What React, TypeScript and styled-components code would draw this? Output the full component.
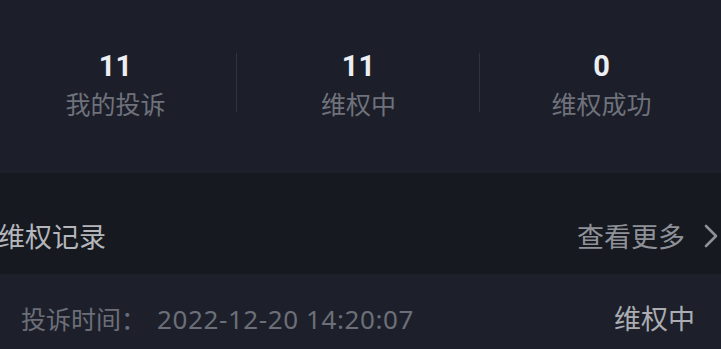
import styled, { createGlobalStyle } from "styled-components";

const GlobalStyle = createGlobalStyle`
  html, body {
    margin: 0;
    padding: 0;
    background: #1d202b;
    overflow: hidden;
  }
  body {
    font-family: Roboto, "Noto Sans CJK SC", sans-serif;
  }
`;

const Page = styled.div`
  width: 721px;
  height: 349px;
  overflow: hidden;
  display: flex;
  flex-direction: column;
`;

const StatsBar = styled.div`
  height: 173px;
  flex-shrink: 0;
  background: #1c1f2a;
  display: grid;
  grid-template-columns: repeat(3, 243px);
  margin-left: -6px;
  padding-top: 47px;
  box-sizing: border-box;
  align-items: start;
`;

const Stat = styled.div<{ $divider?: boolean }>`
  display: flex;
  flex-direction: column;
  align-items: center;
  position: relative;
  &::after {
    content: "";
    display: ${(p) => (p.$divider ? "block" : "none")};
    position: absolute;
    right: 0;
    top: 6px;
    height: 59px;
    width: 1px;
    background: #30343f;
  }
`;

const Num = styled.div`
  font-family: Roboto, "Noto Sans CJK SC", sans-serif;
  font-weight: 700;
  font-size: 29px;
  line-height: 38px;
  color: #eceef2;
`;

const Label = styled.div`
  font-family: "Noto Sans CJK SC", sans-serif;
  font-size: 25px;
  line-height: 34px;
  margin-top: 1px;
  color: #6f727b;
`;

const SectionHead = styled.div`
  height: 101px;
  flex-shrink: 0;
  box-sizing: border-box;
  background: #161920;
  display: flex;
  align-items: flex-start;
  justify-content: space-between;
  padding-top: 44px;
  margin-left: -2px;
  padding-right: 3px;
`;

const HeadTitle = styled.div`
  font-family: "Noto Sans CJK SC", sans-serif;
  font-size: 27px;
  line-height: 38px;
  color: #b4b6bb;
`;

const More = styled.div`
  display: flex;
  align-items: center;
  gap: 19px;
  font-family: "Noto Sans CJK SC", sans-serif;
  font-size: 27px;
  line-height: 38px;
  color: #8f9198;
`;

const Record = styled.div`
  flex: 1;
  background: #1d202b;
  display: flex;
  align-items: flex-start;
  justify-content: space-between;
  padding: 26px 26px 0 21px;
`;

const TimeText = styled.div`
  display: flex;
  align-items: baseline;
  gap: 11px;
  font-family: "Noto Sans CJK SC", sans-serif;
  font-size: 25px;
  line-height: 36px;
  color: #6c6f78;
`;

const DateValue = styled.span`
  font-family: "Noto Sans", "Noto Sans CJK SC", sans-serif;
  font-size: 26px;
  letter-spacing: 0.6px;
`;

const Status = styled.div`
  font-family: "Noto Sans CJK SC", sans-serif;
  font-size: 27px;
  line-height: 36px;
  color: #abadb2;
`;

const Chevron = () => (
  <svg width="14" height="24" viewBox="0 0 14 24" fill="none">
    <path d="M2 2 L12 12 L2 22" stroke="#8f9198" strokeWidth="2.6" strokeLinecap="round" strokeLinejoin="round" />
  </svg>
);

const stats = [
  { num: "11", label: "我的投诉" },
  { num: "11", label: "维权中" },
  { num: "0", label: "维权成功" },
];

export default function App() {
  return (
    <Page>
      <GlobalStyle />
      <StatsBar>
        {stats.map((s, i) => (
          <Stat key={i} $divider={i < stats.length - 1}>
            <Num>{s.num}</Num>
            <Label>{s.label}</Label>
          </Stat>
        ))}
      </StatsBar>
      <SectionHead>
        <HeadTitle>维权记录</HeadTitle>
        <More>
          查看更多
          <Chevron />
        </More>
      </SectionHead>
      <Record>
        <TimeText>
          <span>投诉时间：</span>
          <DateValue>2022-12-20 14:20:07</DateValue>
        </TimeText>
        <Status>维权中</Status>
      </Record>
    </Page>
  );
}
